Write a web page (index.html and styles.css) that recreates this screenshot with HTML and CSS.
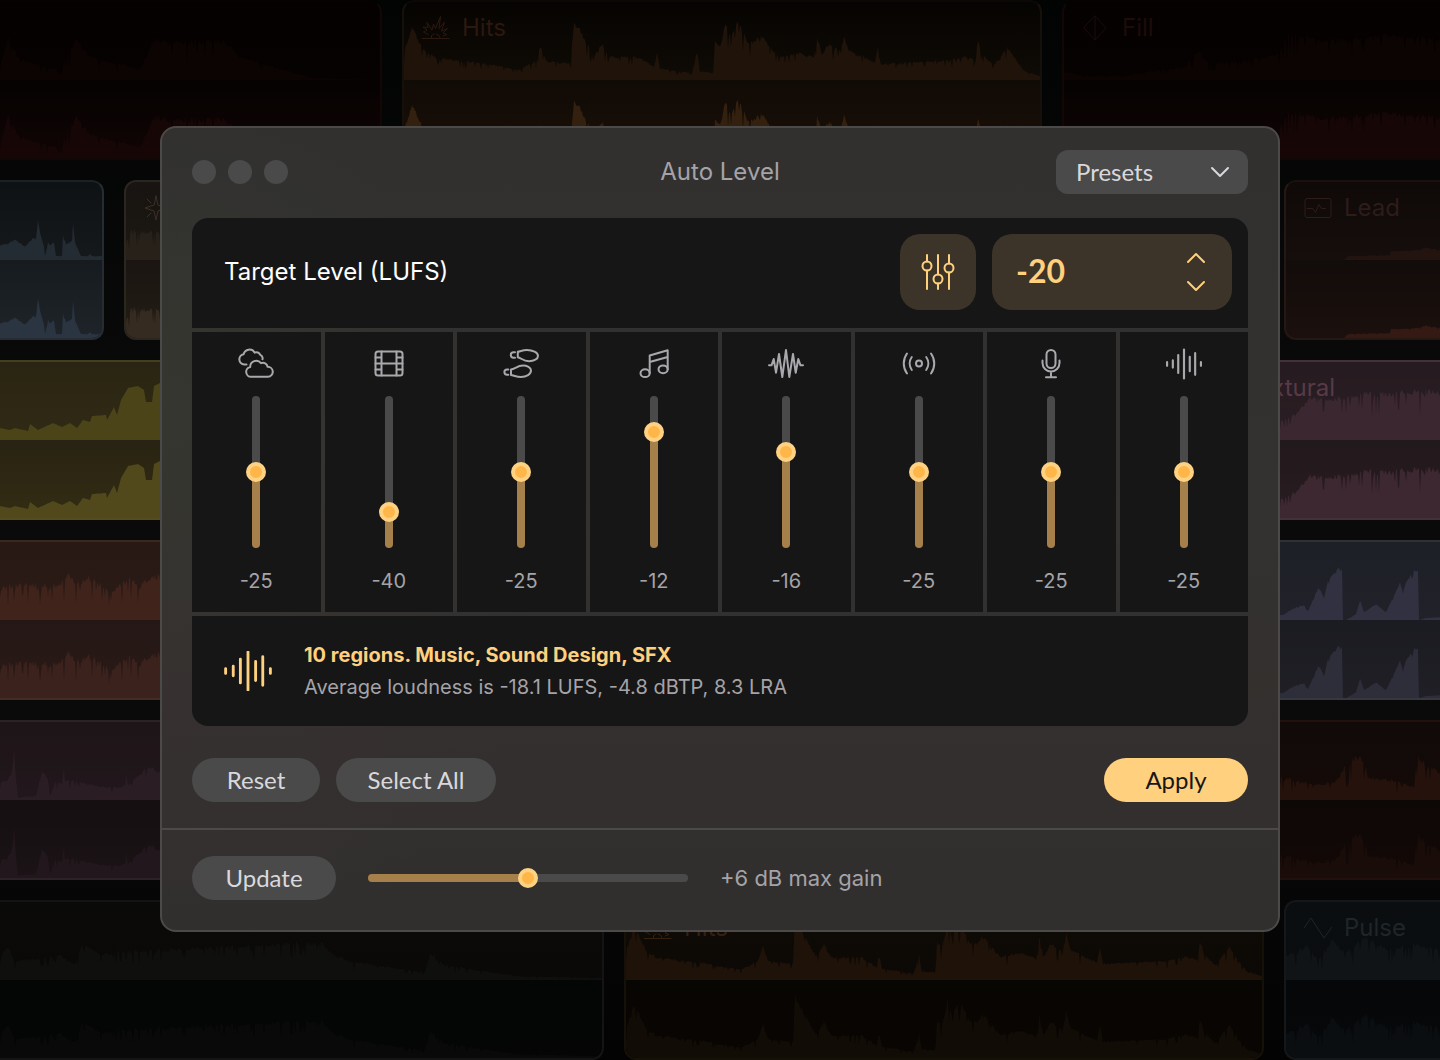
FILE: index.html
```html
<!DOCTYPE html>
<html lang="en">
<head>
<meta charset="utf-8">
<meta name="viewport" content="width=device-width, initial-scale=1">
<title>Auto Level</title>
<link rel="stylesheet" href="styles.css">
</head>
<body>
<svg class="sprite" aria-hidden="true">
  <symbol id="levels" viewBox="0 0 50 42"><path d="M1.500 18.500v5M9.500 16v10M17 8.500v25M25 1v40M33 11v20M40.500 6v30M48.500 18.500v5"/></symbol>
  <symbol id="burst" viewBox="0 0 28 26"><path d="M0 23.500h27M6 19.500L1.500 17l3.500-2-4-3 5 .5-1-5 5 7.500 1.500-6 2 4.500 5-12-1.500 12 5.500-6.500-3 9 6-2.500-4.500 4.500 4 1.500-4 1.500M9.500 23v-2.500l2.500-1.500M18 23l-1-2.500-3-1.500"/></symbol>
  <symbol id="down" viewBox="0 0 20 12"><path d="M2 2l8 8 8-8"/></symbol>
</svg>

<div class="stage">
  <div class="timeline">
    <div class="row">
      <section class="clip ember open-start w-382"><svg class="wave" data-noise=".6" data-env="0,15 8,45 20,22 60,10 76,45 90,25 140,12 155,45 170,40 225,42 240,25 280,12 315,2 382,0"></svg></section>
      <section class="clip amber w-640"><h2 class="clip-name"><svg class="clip-icon"><use href="#burst"/></svg>Hits</h2>
        <svg class="wave" data-noise=".45" data-env="0,30 8,55 20,32 30,24 75,18 115,11 132,20 137,36 142,20 167,17 169,64 178,48 190,24 198,38 205,24 235,24 250,14 253,28 256,12 288,7 293,30 296,9 309,8 311,40 316,35 322,62 326,46 334,60 345,38 358,46 375,24 395,28 410,24 413,46 418,26 425,38 437,30 440,48 444,32 460,24 471,18 474,36 477,17 540,20 560,24 571,22 574,44 578,26 590,16 603,34 620,10 636,4 640,4"></svg></section>
      <section class="clip ember open-end grow"><h2 class="clip-name"><svg class="clip-icon" viewBox="0 0 28 26"><path d="M13 1l11 12-11 12L2 13zM13 1v24"/></svg>Fill</h2>
        <svg class="wave" data-noise=".5" data-env="0,9 20,4 60,4 90,10 120,14 135,32 145,17 180,20 215,28 225,48 260,42 320,48 378,42"></svg></section>
    </div>
    <div class="row">
      <section class="clip steel open-start w-104"><svg class="wave" data-noise=".15" data-env="0,15 10,18 15,21 25,14 33,22 36,22 38,40 40,28 44,14 45,4 48,18 50,15 54,18 56,4 62,4 63,26 66,16 72,20 73,40 75,18 81,4 88,4 90,6 92,4 104,4"></svg></section>
      <section class="clip sand w-1140"><h2 class="clip-name"><svg class="clip-icon" viewBox="0 0 28 26"><path d="M12 1l2 9 9 3-9 3-2 9-2-9-9-3 9-3zM3 4l4 4M21 4l-4 4M3 22l4-4M21 22l-4-4"/></svg></h2>
        <svg class="wave" data-noise=".6" data-env="0,18 6,32 20,30 40,32 1140,30"></svg></section>
      <section class="clip clay open-end grow"><h2 class="clip-name"><svg class="clip-icon" viewBox="0 0 28 26"><path d="M3 3.500h22a2 2 0 0 1 2 2v15a2 2 0 0 1-2 2H3a2 2 0 0 1-2-2v-15a2 2 0 0 1 2-2zM3 13.500h6l2.500 4 3.500-8 2.500 4h4"/></svg>Lead</h2>
        <svg class="wave" data-noise=".2" data-env="0,0 58,0 62,4 104,5 105,9 130,10 140,13 156,10"></svg></section>
    </div>
    <div class="row">
      <section class="clip olive open-start w-1164"><svg class="wave" data-noise="0" data-env="0,12 10,10 15,12 28,9 30,16 38,10 53,17 62,13 70,17 77,12 83,20 90,18 92,24 106,25 107,20 114,33 117,25 121,40 128,52 138,54 144,50 146,38 152,38 154,54 160,57 1164,57"></svg></section>
      <section class="clip rose open-end grow"><h2 class="clip-name"><svg class="clip-icon" viewBox="0 0 28 26"><path d="M2 6h24M2 13h24M2 20h24"/></svg>Textural</h2>
        <svg class="wave" data-noise=".55" data-env="0,10 96,20 110,28 125,46 140,42 170,48 250,52 256,46"></svg></section>
    </div>
    <div class="row">
      <section class="clip rust open-start w-1164"><svg class="wave" data-noise=".6" data-env="0,34 20,38 40,38 60,36 68,52 75,38 90,46 110,30 130,44 140,36 150,46 160,48 1164,40"></svg></section>
      <section class="clip lavender open-end grow"><svg class="wave" data-noise=".15" data-env="0,4 96,5 110,13 118,15 122,9 132,32 135,30 138,22 142,40 150,50 154,54 156,52 157,0 160,0 170,6 174,20 178,8 190,16 200,8 214,38 217,28 220,38 228,50 232,50 233,0 240,2 256,3"></svg></section>
    </div>
    <div class="row">
      <section class="clip mauve open-start w-1164"><svg class="wave" data-noise=".5" data-env="0,18 8,22 12,30 14,54 16,22 18,3 36,4 42,32 48,22 50,5 56,20 62,16 64,35 66,22 100,14 120,13 125,16 126,35 128,16 150,36 157,30 165,30 1164,20"></svg></section>
      <section class="clip brick open-end grow"><svg class="wave" data-noise=".7" data-env="0,20 96,24 130,16 150,20 160,38 165,48 176,44 184,24 210,20 228,14 231,48 240,38 256,28"></svg></section>
    </div>
    <div class="row">
      <section class="clip coal open-start w-604"><svg class="wave" data-noise=".5" data-env="0,25 8,36 15,20 60,26 75,16 82,38 100,28 200,34 320,40 335,26 350,20 380,15 425,8 430,28 445,16 480,10 520,4 606,2"></svg></section>
      <section class="clip amber-deep w-640"><h2 class="clip-name"><svg class="clip-icon"><use href="#burst"/></svg>Hits</h2>
        <svg class="wave" data-noise=".45" data-env="0,30 8,55 20,32 30,24 75,18 115,11 132,20 137,36 142,20 167,17 169,64 178,48 190,24 198,38 205,24 235,24 250,14 253,28 256,12 288,7 293,30 296,9 309,8 311,40 316,35 322,62 326,46 334,60 345,38 358,46 375,24 395,28 410,24 413,46 418,26 425,38 437,30 440,48 444,32 460,24 471,18 474,36 477,17 540,20 560,24 571,22 574,44 578,26 590,16 603,34 620,10 636,4 640,4"></svg></section>
      <section class="clip slate open-end grow"><h2 class="clip-name"><svg class="clip-icon" viewBox="0 0 28 26"><path d="M0 13L7 3l13 20 8-11"/></svg>Pulse</h2>
        <svg class="wave" data-noise=".6" data-env="0,25 20,36 33,22 45,42 60,30 80,46 100,34 130,38 156,32"></svg></section>
    </div>
  </div>

  <main class="window">
    <header class="titlebar">
      <div class="dots"><span class="dot"></span><span class="dot"></span><span class="dot"></span></div>
      <h1 class="title">Auto Level</h1>
      <div class="presets">
        <select class="presets-select" aria-label="Presets"><option>Presets</option></select>
        <svg class="presets-arrow" aria-hidden="true"><use href="#down"/></svg>
      </div>
    </header>

    <div class="panel">
      <section class="target">
        <label class="target-label" for="target">Target Level (LUFS)</label>
        <button class="mixer" type="button" aria-label="Mixer">
          <svg class="mixer-icon" viewBox="0 0 36 36"><path d="M7 1v6.500M7 16.500V35M18 1v19.500M18 29.500V35M29 1v8.500M29 18.500V35"/><circle cx="7" cy="12" r="4.500"/><circle cx="18" cy="25" r="4.500"/><circle cx="29" cy="14" r="4.500"/></svg>
        </button>
        <div class="stepper">
          <input class="stepper-value" id="target" type="text" value="-20">
          <div class="stepper-buttons">
            <button class="step" type="button" aria-label="Increase"><svg class="step-icon up"><use href="#down"/></svg></button>
            <button class="step" type="button" aria-label="Decrease"><svg class="step-icon"><use href="#down"/></svg></button>
          </div>
        </div>
      </section>

      <section class="channels">
        <div class="channel">
          <svg class="channel-icon" viewBox="0 0 36 32"><path d="M8.500 16.500H6.200A5.200 5.200 0 0 1 5.600 6.200 6 6 0 0 1 16.600 4.600 4.200 4.200 0 0 1 22.300 6.800 4 4 0 0 1 24.500 11.300M13 28.800a5 5 0 0 1-.8-9.900 6 6 0 0 1 10.800-3.700 4.600 4.600 0 0 1 6.600 3.600 5 5 0 0 1 .4 10z"/></svg>
          <input class="fader" type="range" aria-label="Ambience" value="50" style="--fill:50%"><output class="channel-value">-25</output>
        </div>
        <div class="channel">
          <svg class="channel-icon" viewBox="0 0 36 32"><rect x="4.500" y="3.500" width="27" height="24" rx="2.500"/><path d="M10.500 3.500v24M25.500 3.500v24M10.500 15.500h15M4.500 9.500h6M4.500 15.500h6M4.500 21.500h6M25.500 9.500h6M25.500 15.500h6M25.500 21.500h6"/></svg>
          <input class="fader" type="range" aria-label="Film" value="20" style="--fill:20%"><output class="channel-value">-40</output>
        </div>
        <div class="channel">
          <svg class="channel-icon" viewBox="0 0 36 32"><path d="M12 4.300h-1.500a2.700 2.700 0 0 0 0 5.400H12M14.800 3.800v5.400c3.200.8 5.700 4 11.200 4 5 0 9-2.200 9-5.200 0-3.500-5.500-6-11-6-4 0-6.500 1.200-9.200 1.800zM5.300 21.500H4a2.600 2.600 0 0 0 0 5.200h1.300M8 21.500V27c3 .6 6 2 10 2 5.500 0 10-3 10-6.500 0-3-4-4.900-8-4.900-5.500 0-8 3.200-12 3.900z"/></svg>
          <input class="fader" type="range" aria-label="Foley" value="50" style="--fill:50%"><output class="channel-value">-25</output>
        </div>
        <div class="channel">
          <svg class="channel-icon" viewBox="0 0 36 32"><path d="M13.700 25V7.500l18-5.200v19M13.700 14l18-5"/><ellipse cx="9.100" cy="25.200" rx="4.600" ry="3.900"/><ellipse cx="27.100" cy="21.300" rx="4.600" ry="3.900"/></svg>
          <input class="fader" type="range" aria-label="Music" value="80" style="--fill:80%"><output class="channel-value">-12</output>
        </div>
        <div class="channel">
          <svg class="channel-icon" viewBox="0 0 36 32"><path d="M1 17.300h2.500L5.700 11 8 24.700 11 6l3.300 23L18 2l3.300 27L25 6l2.700 18.700L30.300 11l2.200 6.300H35"/></svg>
          <input class="fader" type="range" aria-label="Sound Design" value="65" style="--fill:65%"><output class="channel-value">-16</output>
        </div>
        <div class="channel">
          <svg class="channel-icon" viewBox="0 0 36 32"><circle cx="18" cy="15.500" r="3"/><path d="M6 5.500a17 17 0 0 0 0 20M10.800 9a11 11 0 0 0 0 13M30 5.500a17 17 0 0 1 0 20M25.200 9a11 11 0 0 1 0 13"/></svg>
          <input class="fader" type="range" aria-label="SFX" value="50" style="--fill:50%"><output class="channel-value">-25</output>
        </div>
        <div class="channel">
          <svg class="channel-icon" viewBox="0 0 36 32"><rect x="13.500" y="2" width="9" height="18" rx="4.500"/><path d="M9.500 12.500V15a8.500 8.500 0 0 0 17 0v-2.500M18 23.500v5.800M13 29.300h10"/></svg>
          <input class="fader" type="range" aria-label="Voice" value="50" style="--fill:50%"><output class="channel-value">-25</output>
        </div>
        <div class="channel">
          <svg class="channel-icon channel-levels"><use href="#levels"/></svg>
          <input class="fader" type="range" aria-label="Other" value="50" style="--fill:50%"><output class="channel-value">-25</output>
        </div>
      </section>

      <section class="summary">
        <svg class="summary-icon" aria-hidden="true"><use href="#levels"/></svg>
        <div class="summary-text">
          <p class="summary-title">10 regions. Music, Sound Design, SFX</p>
          <p class="summary-detail">Average loudness is -18.1 LUFS, -4.8 dBTP, 8.3 LRA</p>
        </div>
      </section>
    </div>

    <div class="actions">
      <button class="pill w-128" type="button">Reset</button>
      <button class="pill w-160" type="button">Select All</button>
      <button class="pill primary w-144" type="button">Apply</button>
    </div>

    <footer class="footer">
      <button class="pill w-144" type="button">Update</button>
      <input class="gain" id="gain" type="range" value="50" style="--fill:50%">
      <label class="gain-label" for="gain">+6 dB max gain</label>
    </footer>
  </main>
</div>
<script src="waves.js"></script>
</body>
</html>
```

FILE: styles.css
```css
* { box-sizing: border-box; }

body {
  margin: 0;
  background: #050505;
  color: #a5a3a8;
  font-family: Inter, "Liberation Sans", sans-serif;
}

h1, h2, p { margin: 0; font-weight: 400; }

svg { fill: none; stroke: currentColor; stroke-width: 2; stroke-linecap: round; stroke-linejoin: round; }
button, input, select { font: inherit; color: inherit; }
button { border: 0; padding: 0; cursor: pointer; }

.sprite { display: none; }

/* The timeline and the window share one grid cell, the window on top. */
.stage { display: grid; grid-template-columns: minmax(0, 1fr); }
.timeline, .window { grid-area: 1 / 1; }

/* Timeline */
.timeline {
  display: flex;
  flex-direction: column;
  gap: 20px;
  overflow: hidden;
  background: linear-gradient(#020303, #0a0a0a 40%, #0a0a0a 65%, #030303);
}
.row { display: flex; gap: 20px; height: 160px; }

.clip {
  display: grid;
  flex: none;
  overflow: hidden;
  border: 2px solid var(--edge);
  border-top-color: var(--edge-top, var(--edge));
  border-radius: 12px;
  background: linear-gradient(var(--top-a), var(--top-b) 50%, var(--low-a) 50%, var(--low-b));
}
.clip > * { grid-area: 1 / 1; }
.open-start { border-left: 0; border-top-left-radius: 0; border-bottom-left-radius: 0; }
.open-end { border-right: 0; border-top-right-radius: 0; border-bottom-right-radius: 0; }
.grow { flex: 1; min-width: 0; }

.w-104 { width: 104px; }
.w-128 { width: 128px; }
.w-144 { width: 144px; }
.w-160 { width: 160px; }
.w-382 { width: 382px; }
.w-604 { width: 604px; }
.w-640 { width: 640px; }
.w-1140 { width: 1140px; }
.w-1164 { width: 1164px; }

.clip-name {
  display: flex;
  align-items: center;
  gap: 12px;
  height: 32px;
  margin: 10px 18px;
  color: var(--name);
  font-size: 24px;
  line-height: 32px;
}
.clip-icon { width: 28px; height: 26px; stroke-width: 1; }
.wave { display: block; width: 100%; height: 156px; stroke: none; }
.wave-top { fill: var(--wave-top); }
.wave-low { fill: var(--wave-low); }

.ember { --edge: #120606; --edge-top: #060202; --top-a: #040100; --top-b: #070202; --low-a: #060202; --low-b: #100504; --wave-top: #0b0403; --wave-low: #160706; --name: #1c0c0a; }
.amber { --edge: #15100a; --edge-top: #0c0805; --top-a: #060402; --top-b: #0f0b06; --low-a: #110b06; --low-b: #190f07; --wave-top: #20130a; --wave-low: #33200e; --name: #2c180e; }
.steel { --edge: #252d32; --edge-top: #1b2124; --top-a: #0e1214; --top-b: #15191c; --low-a: #171b1f; --low-b: #1e2429; --wave-top: #232b33; --wave-low: #2a3541; --name: #2a3541; }
.sand { --edge: #2c2620; --top-a: #171411; --top-b: #1c1813; --low-a: #1a1511; --low-b: #241d16; --wave-top: #28211a; --wave-low: #352b21; --name: #3c3028; }
.clay { --edge: #251713; --edge-top: #1a110f; --top-a: #0f0908; --top-b: #150e0c; --low-a: #120c0a; --low-b: #1b100d; --wave-top: #241410; --wave-low: #351a14; --name: #2e1c19; }
.olive { --edge: #554c22; --edge-top: #443e20; --top-a: #2a2512; --top-b: #302a15; --low-a: #282312; --low-b: #332c14; --wave-top: #4b4419; --wave-low: #51491b; --name: #6b6127; }
.rose { --edge: #443039; --top-a: #261b20; --top-b: #2a1e23; --low-a: #22191c; --low-b: #281c20; --wave-top: #3a2730; --wave-low: #3d2831; --name: #583a47; }
.rust { --edge: #462b24; --edge-top: #3a2721; --top-a: #281915; --top-b: #2b1b17; --low-a: #241715; --low-b: #2a1a17; --wave-top: #40231b; --wave-low: #3c221c; --name: #613429; }
.lavender { --edge: #373740; --edge-top: #303037; --top-a: #1e2027; --top-b: #202129; --low-a: #1b1c21; --low-b: #1f1f25; --wave-top: #323141; --wave-low: #2e2d3a; --name: #4a495e; }
.mauve { --edge: #2c2126; --top-a: #1e1518; --top-b: #21171c; --low-a: #150f11; --low-b: #1b1316; --wave-top: #2b1d24; --wave-low: #22171c; --name: #3b2a32; }
.brick { --edge: #21100d; --top-a: #110a08; --top-b: #140b09; --low-a: #0d0706; --low-b: #130907; --wave-top: #25120c; --wave-low: #1a0d09; --name: #3a1a12; }
.coal { --edge: #141414; --top-a: #0a0a09; --top-b: #0a0908; --low-a: #040505; --low-b: #050505; --wave-top: #0f0f0d; --wave-low: #080908; --name: #1a1a18; }
.amber-deep { --edge: #151008; --top-a: #0f0b06; --top-b: #0c0805; --low-a: #080603; --low-b: #080502; --wave-top: #1f1209; --wave-low: #120c06; --name: #35200f; }
.slate { --edge: #14181a; --top-a: #0b0e10; --top-b: #0a0c0e; --low-a: #060708; --low-b: #070809; --wave-top: #101417; --wave-low: #0b0e10; --name: #1f2529; }

/* Window */
.window {
  align-self: start;
  justify-self: center;
  width: calc(100% - 320px);
  min-width: 960px;
  margin-top: 126px;
  overflow: hidden;
  border: 2px solid #4b4a48;
  border-radius: 16px;
  background:
    radial-gradient(circle at 0 35%, #35362f, transparent 25%),
    radial-gradient(circle at 0 60%, #363130, transparent 30%),
    linear-gradient(#31302f, #333230 50%, #332f2e 80%, #302f2e);
}

.titlebar {
  display: grid;
  grid-template-columns: 1fr auto 1fr;
  align-items: center;
  padding: 22px 30px 24px;
}
.dots { display: flex; gap: 12px; }
.dot { width: 24px; height: 24px; border-radius: 50%; background: #4a4a4a; }
.title { font-size: 24px; line-height: 32px; }

.presets { position: relative; justify-self: end; width: 192px; }
.presets-select {
  display: block;
  width: 100%;
  height: 44px;
  padding: 0 20px 2px;
  appearance: none;
  border: 0;
  border-radius: 12px;
  background: #4a4a4a;
  color: #d9d8dc;
  font-family: Lato, sans-serif;
  font-size: 24px;
}
.presets-arrow {
  position: absolute;
  top: 16px;
  right: 18px;
  width: 20px;
  height: 12px;
  color: #d9d8dc;
  pointer-events: none;
}

.panel {
  display: grid;
  gap: 4px;
  margin: 0 30px;
  overflow: hidden;
  border-radius: 16px;
}

.target {
  display: flex;
  gap: 16px;
  padding: 16px 16px 18px 32px;
  background: #161616;
}
.target-label { flex: 1; color: #fff; font-size: 24px; line-height: 76px; }
.mixer {
  display: grid;
  place-items: center;
  width: 76px;
  height: 76px;
  border-radius: 20px;
  background: #3c3428;
  color: #ffd07e;
}
.mixer-icon { width: 36px; height: 36px; }
.stepper {
  display: flex;
  align-items: center;
  width: 240px;
  height: 76px;
  padding: 0 24px;
  border-radius: 20px;
  background: #3c3428;
  color: #ffd07e;
}
.stepper-value {
  flex: 1;
  min-width: 0;
  padding: 0 0 4px;
  border: 0;
  background: none;
  font-family: Lato, sans-serif;
  font-size: 32px;
  font-weight: 700;
}
.stepper-buttons { display: grid; }
.step { display: grid; place-items: center; width: 24px; height: 28px; background: none; }
.step-icon { width: 20px; height: 12px; }
.up { transform: rotate(180deg); }

.channels { display: grid; grid-template-columns: repeat(8, minmax(0, 1fr)); gap: 4px; }
.channel {
  display: flex;
  flex-direction: column;
  align-items: center;
  padding: 16px 0 18px;
  background: #161616;
}
.channel-icon { width: 36px; height: 32px; color: #a9a8ad; stroke-width: 2; }
.channel-levels { stroke-width: 3; }
.channel-value { font-size: 20px; line-height: 26px; }

/* Sliders: --fill is the share of the track below the thumb. */
.fader, .gain { margin: 0; appearance: none; background: none; cursor: pointer; }
.fader {
  width: 20px;
  height: 152px;
  margin: 16px 0 20px;
  writing-mode: vertical-lr;
  direction: rtl;
}
.fader::-webkit-slider-runnable-track {
  width: 8px;
  border-radius: 4px;
  background: linear-gradient(to top, #a5804b var(--fill), #4a4a4a var(--fill));
}
.gain { width: 320px; height: 20px; }
.gain::-webkit-slider-runnable-track {
  height: 8px;
  border-radius: 4px;
  background: linear-gradient(to right, #a5804b var(--fill), #4a4a4a var(--fill));
}
.fader::-webkit-slider-thumb, .gain::-webkit-slider-thumb {
  width: 20px;
  height: 20px;
  appearance: none;
  border: 4px solid #ffd182;
  border-radius: 50%;
  background: #ffb648;
}
.fader::-webkit-slider-thumb { margin-left: -6px; }
.gain::-webkit-slider-thumb { margin-top: -6px; }

.summary {
  display: flex;
  align-items: center;
  gap: 32px;
  height: 110px;
  padding: 0 32px;
  background: #161616;
}
.summary-icon { width: 48px; height: 40px; color: #ffd07e; stroke-width: 3; }
.summary-text { font-size: 20px; line-height: 32px; }
.summary-title { color: #ffd07e; font-weight: 700; }

.actions { display: flex; gap: 16px; padding: 32px 30px 26px; }
.pill {
  height: 44px;
  padding-bottom: 2px;
  border-radius: 22px;
  background: #4a4a4a;
  color: #d9d8dc;
  font-family: Lato, sans-serif;
  font-size: 24px;
}
.primary { margin-left: auto; background: #ffd07e; color: #161616; }

.footer {
  display: flex;
  align-items: center;
  gap: 32px;
  padding: 26px 30px 30px;
  border-top: 2px solid #4b4a48;
}
.gain-label { font-size: 22px; line-height: 32px; }
```

FILE: waves.js
```js
// Builds each clip's two-channel waveform from its list of "x,height" points.
const SVG = 'http://www.w3.org/2000/svg';

function heightAt(points, x) {
  for (let i = 1; i < points.length; i++) {
    const [x0, h0] = points[i - 1];
    const [x1, h1] = points[i];
    if (x <= x1) return h0 + (h1 - h0) * (x - x0) / (x1 - x0);
  }
  return points[points.length - 1][1];
}

document.querySelectorAll('.wave').forEach((svg, index) => {
  const points = svg.dataset.env.split(' ').map(p => p.split(',').map(Number));
  const noise = Number(svg.dataset.noise);
  const end = points[points.length - 1][0];
  let seed = 7 + index * 31;
  const random = () => (seed = (seed * 16807) % 2147483647) / 2147483647;
  const outline = [];
  for (let x = 0; x <= end; x += 1) {
    // Shallow ripple everywhere, with a deep notch now and then.
    const dip = random() < .2 ? random() : random() * .25;
    outline.push([x, heightAt(points, x) * (1 - noise * dip)]);
  }
  [['wave-top', 78], ['wave-low', 156]].forEach(([name, base]) => {
    const path = document.createElementNS(SVG, 'path');
    const line = outline.map(([x, h]) => `L${x} ${(base - h).toFixed(1)}`).join('');
    path.setAttribute('d', `M0 ${base}${line}L${end} ${base}Z`);
    path.setAttribute('class', name);
    svg.append(path);
  });
});

// Keeps the coloured part of a slider in step with its value.
document.querySelectorAll('input[type=range]').forEach(slider => {
  slider.addEventListener('input', () => slider.style.setProperty('--fill', slider.value + '%'));
});
```
